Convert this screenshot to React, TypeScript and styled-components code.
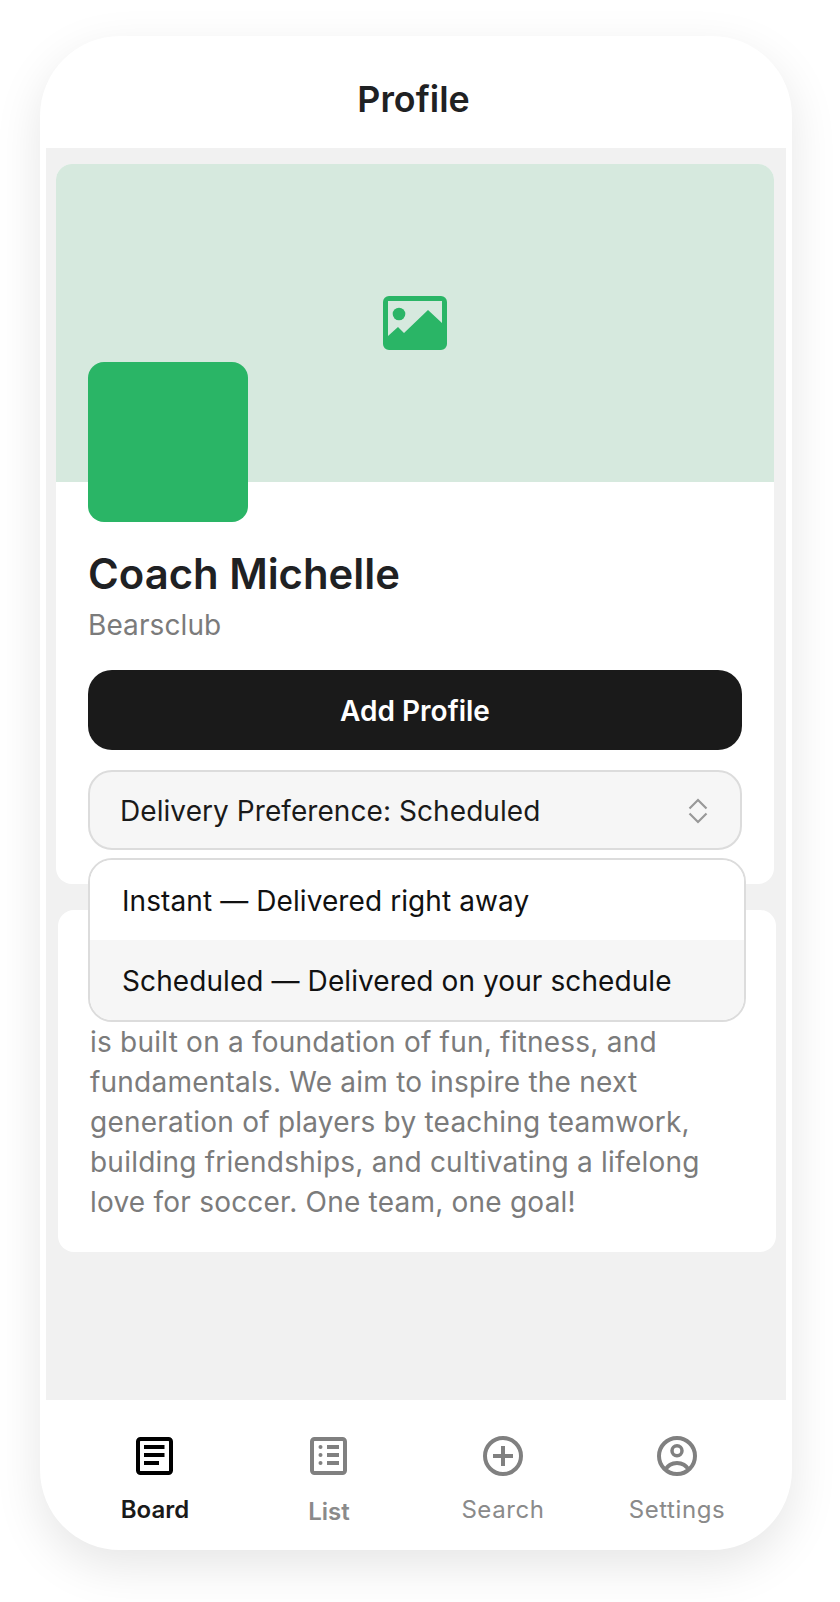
import React from "react";
import styled, { createGlobalStyle } from "styled-components";

const Global = createGlobalStyle`
  html, body { margin: 0; padding: 0; background: #fff; }
  * { box-sizing: border-box; }
  body { font-family: Inter, "Liberation Sans", sans-serif; }
`;
const Page = styled.div`
  width: 840px; height: 1602px; padding: 36px 48px 52px 40px; overflow: hidden;
`;
const Phone = styled.div`
  width: 752px; height: 1514px; background: #fff; border-radius: 80px;
  box-shadow: 0 16px 48px rgba(0,0,0,.1);
  display: flex; flex-direction: column; overflow: hidden;
`;
const Header = styled.header`
  height: 112px; flex: none; display: flex; align-items: center; justify-content: center;
  padding: 14px 5px 0 0;
  font-size: 35.800px; font-weight: 600; color: #1f2123;
`;
const Screen = styled.main`
  flex: 1; margin: 0 6px; background: #f1f1f1; padding: 16px 10px; position: relative;
`;
const ProfileCard = styled.section`
  height: 720px; margin-right: 2px; background: #fff; border-radius: 16px;
  display: flex; flex-direction: column;
`;
const Hero = styled.div`
  height: 318px; flex: none; background: #d6e9de; border-radius: 16px 16px 0 0;
  display: flex; align-items: center; justify-content: center; position: relative;
`;
const HeroIcon = styled.svg` width: 64px; height: 54px; `;
const Avatar = styled.div`
  position: absolute; left: 32px; top: 198px; width: 160px; height: 160px;
  background: #2ab566; border-radius: 16px;
`;
const Body = styled.div`
  padding: 68px 32px 0; display: flex; flex-direction: column; position: relative;
`;
const Name = styled.h1`
  margin: 0; font-size: 41.800px; line-height: 48px; font-weight: 600; color: #1f2123;
`;
const Club = styled.div`
  margin-top: 7px; font-size: 28px; line-height: 40px; color: #7b7b7b; letter-spacing: .1px;
`;
const Primary = styled.button`
  margin-top: 25px; height: 80px; width: 100%; border: 0; border-radius: 24px; background: #1a1a1a;
  padding: 2px 0 0; color: #fff; font: 600 28px Inter, sans-serif;
`;
const Trigger = styled.div`
  margin-top: 20px; height: 80px; border: 2px solid #dcdcdc; border-radius: 24px; background: #f6f6f6;
  display: flex; align-items: center; justify-content: space-between;
  padding: 2px 32px 0 30px; font-size: 28px; font-weight: 400; color: #1a1a1a; letter-spacing: .07px;
`;
const Menu = styled.div`
  position: absolute; left: 32px; top: 376px; width: 658px; height: 164px;
  border: 2px solid #dcdcdc; border-radius: 24px; background: #fff; overflow: hidden; z-index: 2;
`;
const Option = styled.div<{ $selected?: boolean }>`
  height: 80px; display: flex; align-items: center; padding: 2px 0 0 32px;
  font-size: 28px; color: #111; letter-spacing: .09px;
  background: ${(p) => (p.$selected ? "#f6f6f6" : "#fff")};
`;
const AboutCard = styled.section`
  margin: 26px 0 0 2px; background: #fff; border-radius: 16px; padding: 112px 32px 30px 32px;
  font-size: 28px; line-height: 40px; color: #7b7b7b; letter-spacing: .22px;
`;
const Tabs = styled.nav`
  height: 150px; flex: none; display: grid; grid-template-columns: repeat(4, 174px); padding: 36px 0 0 28px;
`;
const Tab = styled.div`
  display: flex; flex-direction: column; align-items: center;
`;
const TabIcon = styled.svg` width: 40px; height: 40px; display: block; `;
const TabLabel = styled.span<{ $active?: boolean; $bold?: boolean; $drop?: number }>`
  margin-top: ${(p) => 19 + (p.$drop ?? 0)}px; font-size: 24px; line-height: 30px;
  font-weight: ${(p) => (p.$bold ? 600 : 400)};
  letter-spacing: ${(p) => (p.$bold ? 0 : 0.6)}px;
  color: ${(p) => (p.$active ? "#1a1a1a" : "#8a8a8a")};
`;

export default function App() {
  return (
    <>
      <Global />
      <Page>
        <Phone>
          <Header>Profile</Header>
          <Screen>
            <ProfileCard>
              <Hero>
                <HeroIcon viewBox="0 0 64 54">
                  <path fillRule="evenodd" fill="#2ab566" d="M6 0H58a6 6 0 0 1 6 6V48a6 6 0 0 1-6 6H6a6 6 0 0 1-6-6V6a6 6 0 0 1 6-6ZM5 5V40L15 31 21 37 45 14 59 27V5Z" />
                  <circle cx="16" cy="18" r="6.300" fill="#2ab566" />
                </HeroIcon>
                <Avatar />
              </Hero>
              <Body>
                <Name>Coach Michelle</Name>
                <Club>Bearsclub</Club>
                <Primary>Add Profile</Primary>
                <Trigger>
                  <span>Delivery Preference: Scheduled</span>
                  <svg width="20" height="26" viewBox="0 0 20 26" fill="none" stroke="#999" strokeWidth="2.200">
                    <path d="M1.500 10.500 10 2l8.500 8.500M1.500 15.500 10 24l8.500-8.500" />
                  </svg>
                </Trigger>
                <Menu>
                  <Option>Instant — Delivered right away</Option>
                  <Option $selected>Scheduled — Delivered on your schedule</Option>
                </Menu>
              </Body>
            </ProfileCard>
            <AboutCard>
              is built on a foundation of fun, fitness, and<br />
              fundamentals. We aim to inspire the next<br />
              generation of players by teaching teamwork,<br />
              building friendships, and cultivating a lifelong<br />
              love for soccer. One team, one goal!
            </AboutCard>
          </Screen>
          <Tabs>
            <Tab>
              <TabIcon viewBox="0 0 40 40" fill="none">
                <rect x="3" y="3" width="33" height="34" rx="2.500" stroke="#000" strokeWidth="4" />
                <path d="M9 11H29.500M9 19H29.500M9 27H24" stroke="#000" strokeWidth="4" />
              </TabIcon>
              <TabLabel $active $bold>Board</TabLabel>
            </Tab>
            <Tab>
              <TabIcon viewBox="0 0 40 40" fill="none">
                <rect x="3" y="3" width="33" height="34" rx="2.500" stroke="#808080" strokeWidth="4" />
                <path d="M18 11H30M18 19H30M18 27H30" stroke="#808080" strokeWidth="4" />
                <circle cx="11.500" cy="11" r="2" fill="#808080" />
                <circle cx="11.500" cy="19" r="2" fill="#808080" />
                <circle cx="11.500" cy="27" r="2" fill="#808080" />
              </TabIcon>
              <TabLabel $bold $drop={2}>List</TabLabel>
            </Tab>
            <Tab>
              <TabIcon viewBox="0 0 40 40" fill="none" stroke="#808080" strokeWidth="4">
                <circle cx="20" cy="20" r="18" />
                <path d="M10 20H30M20 10V30" />
              </TabIcon>
              <TabLabel>Search</TabLabel>
            </Tab>
            <Tab>
              <TabIcon viewBox="0 0 40 40" fill="none" stroke="#808080" strokeWidth="4">
                <circle cx="20" cy="20" r="18" />
                <circle cx="20" cy="14.800" r="5" strokeWidth="3.500" />
                <path d="M8 34C11 29 15 27 20 27S29 29 32 34" />
              </TabIcon>
              <TabLabel>Settings</TabLabel>
            </Tab>
          </Tabs>
        </Phone>
      </Page>
    </>
  );
}
